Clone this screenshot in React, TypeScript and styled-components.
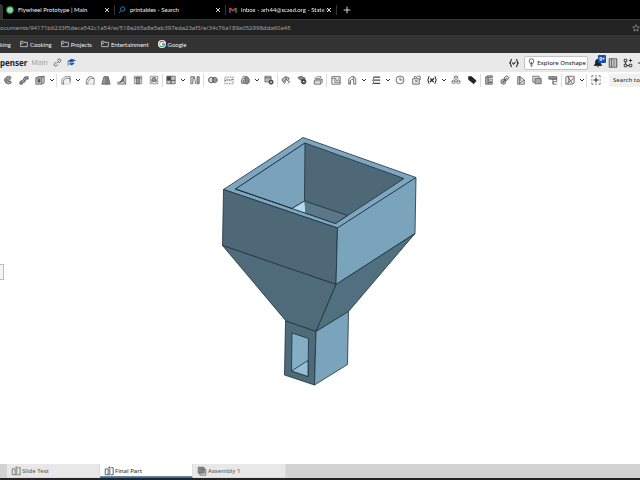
import React from "react";
import styled, { createGlobalStyle } from "styled-components";

const GlobalStyle = createGlobalStyle`
  * { box-sizing: border-box; }
  html, body { margin: 0; height: 100%; }
  #root { height: 100vh; }
  body { font-family: "Noto Sans", "Open Sans", sans-serif; font-size: 6px; overflow: hidden; }
  button, input { font: inherit; color: inherit; border: 0; padding: 0; background: none; }
  svg { display: block; flex: none; }
`;

const Page = styled.div`
  height: 100vh;
  display: flex;
  flex-direction: column;
  overflow: hidden;
  background: #fff;
`;

/* Browser chrome */
const TabStrip = styled.div`
  display: flex;
  flex: none;
  align-items: center;
  height: 19px;
  background: #000;
  color: #f2f2f2;
  font-family: Lato, "Open Sans", sans-serif;
`;
const CurrentTabEdge = styled.div`
  width: 3px;
  height: 15px;
  align-self: flex-end;
  background: #333;
  border-top-right-radius: 3px;
`;
const BrowserTab = styled.div<{ $width: number }>`
  display: flex;
  align-items: center;
  gap: 4px;
  width: ${(p) => p.$width}px;
  height: 10px;
  padding: 0 4px 0 3px;
  border-right: 1px solid #353535;
`;
const TabTitle = styled.button`
  flex: 1;
  min-width: 0;
  display: flex;
  align-items: center;
  gap: 4px;
  text-align: left;
  white-space: nowrap;
`;
const TabText = styled.span<{ $fade?: boolean }>`
  flex: 1;
  ${(p) => p.$fade && "mask-image: linear-gradient(90deg, #000 88%, transparent 105%);"}
`;
const IconButton = styled.button`
  display: flex;
  flex: none;
  align-items: center;
  justify-content: center;
`;
const NewTab = styled(IconButton)`
  width: 19px;
  height: 12px;
`;
const AddressRow = styled.div`
  display: flex;
  flex: none;
  align-items: center;
  height: 16px;
  background: #222;
  border-top: 1px solid #383838;
  color: #a3a3a3;
`;
const Address = styled.input`
  flex: 1;
  min-width: 0;
  height: 14px;
  outline: none;
`;
const Bookmarks = styled.nav`
  display: flex;
  flex: none;
  align-items: center;
  gap: 9px;
  height: 18px;
  background: #333;
  color: #f0f0f0;
  font-family: Lato, "Open Sans", sans-serif;
`;
const Bookmark = styled.a`
  display: flex;
  align-items: center;
  gap: 2px;
  color: inherit;
  text-decoration: none;
  white-space: nowrap;
`;

/* Application header */
const Header = styled.header`
  display: flex;
  flex: none;
  align-items: center;
  height: 19px;
  background: #e9e9e9;
  color: #333;
`;
const DocTitle = styled.h1`
  margin: 0 4px 0 0;
  font-size: 8px;
  font-weight: 700;
  color: #222;
`;
const Workspace = styled.span`
  margin-right: 5px;
  font-size: 7px;
  color: #a0a0a0;
`;
const HeaderActions = styled.div`
  display: flex;
  align-items: center;
  gap: 5px;
  margin-left: auto;
`;
const DocActions = styled.div`
  display: flex;
  gap: 5px;
`;
const Explore = styled.button`
  display: flex;
  align-items: center;
  gap: 1px;
  height: 14px;
  padding: 0 1px 0 2px;
  border: 1px solid #c4c4c4;
  border-radius: 2px;
  background: #fff;
  font-weight: 500;
  white-space: nowrap;
`;
const Bell = styled(IconButton)`
  position: relative;
  width: 10px;
  height: 13px;
  justify-content: flex-start;
`;
const Badge = styled.span`
  position: absolute;
  top: -1px;
  right: -3px;
  width: 8px;
  height: 8px;
  border-radius: 1px;
  background: #1450b4;
  color: #fff;
  font-size: 5px;
  font-weight: 700;
  line-height: 8px;
  text-align: center;
`;

/* Feature toolbar */
const Toolbar = styled.div`
  display: flex;
  flex: none;
  align-items: center;
  height: 16px;
  background: #fff;
  color: #606060;
  overflow: hidden;
`;
const Tool = styled(IconButton)`
  width: 16px;
  height: 16px;
`;
const Arrow = styled(IconButton)`
  width: 8px;
  height: 16px;
  color: #333;
`;
const Divider = styled.span<{ $wide?: boolean }>`
  flex: none;
  width: 1px;
  height: 13px;
  margin-right: ${(p) => (p.$wide ? 1 : 0)}px;
  background: #dcdcdc;
`;
const Search = styled.input`
  flex: 1;
  min-width: 0;
  height: 13px;
  margin-left: 5px;
  padding-left: 4px;
  border-radius: 2px 0 0 2px;
  background: #f0f0f0;
  color: #444;
  font-weight: 500;
  outline: none;
  &::placeholder { color: #444; opacity: 1; }
`;

/* Modelling area */
const Canvas = styled.main`
  display: flex;
  align-items: center;
  flex: 1;
  min-height: 0;
  position: relative;
`;
const Model = styled.svg`
  width: 100%;
  height: 100%;
`;
const PanelHandle = styled.button`
  position: absolute;
  left: 0;
  width: 4px;
  height: 16px;
  margin-top: -8px;
  border: 1px solid #bdbdbd;
  border-left: 0;
  background: #f6f6f6;
`;

/* Document tabs */
const DocTabs = styled.nav`
  display: flex;
  flex: none;
  height: 14px;
  padding-left: 7px;
  background: #d2d2d2;
`;
const DocTab = styled.button<{ $active?: boolean }>`
  display: flex;
  align-items: center;
  gap: 1px;
  width: 93px;
  padding-left: 4px;
  border-right: 1px solid #ddd;
  border-bottom: 1px solid ${(p) => (p.$active ? "#3d6ea8" : "#dedede")};
  box-shadow: ${(p) => (p.$active ? "inset 0 -1px #5b8abd" : "none")};
  background: ${(p) => (p.$active ? "#fff" : "#e8e8e8")};
  color: ${(p) => (p.$active ? "#444" : "#666")};
  font-weight: 500;
  white-space: nowrap;
`;
const Taskbar = styled.div`
  flex: none;
  height: 2px;
  background: #242424;
`;

const drawings: Record<string, React.ReactNode> = {
  revolve: (
    <>
      <path d="M10 3 8 1.5 4.5 2 2 4.5v3L4 10l3 .8 3-1.3-1-2-2 .7-1.7-1V5l1.3-1 2 .5z" fill="#aaa" />
      <path d="M5 3 3.5 5v3L5 10M9 5.5H6.5v1.8H9" />
    </>
  ),
  sweep: (
    <>
      <path d="M1 9.500C1 6 4 7 5 6s0-4 4-4h2v3H9C7.500 5 8.500 8 6 9H4v2H1z" fill="#999" />
      <path d="M5 5l2 2M7 2.500 9 5M2 8l2 2" />
    </>
  ),
  loft: (
    <>
      <path d="M1 3.500 4 2l7-.5v8L8 11H1z" fill="#ccc" />
      <path d="M1 3.500h7V11M8 3.500l3-2" />
      <path d="M3.500 5v3.500H6V5z" fill="#555" />
    </>
  ),
  fillet: (
    <>
      <path d="M1 11V5.500L4.500 2H11v8" fill="#f2f2f2" strokeWidth=".8" />
      <path d="M3 11V8c0-3 2-4 4-4h4M1 11h3M5.500 11h1M8 11h1M10.500 11h.5M11 4v3" strokeWidth=".8" />
    </>
  ),
  chamfer: (
    <>
      <path d="M1.500 11V7L5 2h3l3 2v7" fill="#f2f2f2" strokeWidth=".8" />
      <path d="M3.500 11V8L7 4h4M5 2 2 6M1.500 11H4M6 11h1M9 11h2" strokeWidth=".8" />
    </>
  ),
  draft: (
    <>
      <path d="M3.500 2h5L11 11H1z" fill="#999" />
      <path d="M6 2v9M8.500 2 8 11" />
    </>
  ),
  rib: (
    <>
      <path d="M8 1.500h2.500V11H1V8.500h3z" fill="#ccc" strokeWidth=".8" />
      <path d="M8 2v5L3 9l5-5z" fill="#777" />
      <path d="M8 7l2.500 4" />
    </>
  ),
  shell: (
    <>
      <path d="M1.500 1.500h9v9h-9z" fill="#e2e2e2" strokeWidth=".7" />
      <path d="M4 3h4v7.500H4z" fill="#999" />
      <path d="M1.500 3.500h9" />
    </>
  ),
  hole: (
    <>
      <path d="M1.500 1.500h9v9h-9z" fill="#eee" strokeWidth=".7" />
      <circle cx="6" cy="5.500" r="2.500" fill="#999" />
      <path d="M3.500 6v3M8.500 6v3" />
    </>
  ),
  pattern: (
    <>
      <path d="M1 1.500h5v5H1z" fill="#444" />
      <path d="M6 1.500h5v5H6zM1 6.500h5v4H1zM6 6.500h5v4H6z" fill="#ccc" />
    </>
  ),
  mirror: (
    <>
      <path d="M1 2h3.500v2h-1v6.500H1z" fill="#ddd" />
      <path d="m5 1.500 2 9.500" />
      <path d="M11 2H8.500v8.500H11z" fill="#aaa" />
    </>
  ),
  boolean: (
    <>
      <circle cx="4" cy="6" r="3.200" fill="#eee" />
      <circle cx="8" cy="6" r="3.200" fill="#999" />
      <circle cx="4" cy="6" r="3.200" />
    </>
  ),
  split: (
    <>
      <path d="M1 2.500h10v8H1z" fill="#f5f5f5" strokeDasharray="2 1" strokeWidth=".8" />
      <path d="M1 7c3-3 6 1 10-2" />
    </>
  ),
  transform: (
    <>
      <path d="M1.500 6 4 3.500l3 1V10H2z" fill="#ccc" />
      <path d="M6 2.500 9 2l2 3v4l-3 2-2-2z" fill="#888" />
      <path d="M3 3c1-2 2-2 4-1M4 6v4" />
    </>
  ),
  deletePart: (
    <>
      <path d="M1 1.500h7.500v7H1z" fill="#bbb" strokeWidth=".8" />
      <path d="M1 3.500h7.500" />
      <circle cx="8.500" cy="8.500" r="2.500" fill="#444" stroke="#444" />
      <path d="m7.700 7.700 1.600 1.600m0-1.600L7.700 9.300" stroke="#fff" />
    </>
  ),
  modify: (
    <>
      <path d="M1 6c2-4 6-5 9-2L8 7 6 5 3 9z" fill="#bbb" />
      <path d="M5 1.500 6.500 5 4 11M8 7l2.500 1L8 10" />
    </>
  ),
  deleteFace: (
    <>
      <path d="m1 3 4-1.500L10 4 8 6.500 4 6z" fill="#888" />
      <circle cx="8" cy="8" r="2.800" fill="#444" stroke="#444" />
      <path d="m7.200 7.200 1.600 1.600m0-1.600L7.200 8.800" stroke="#fff" />
    </>
  ),
  moveFace: (
    <>
      <path d="M1.500 7 4 5h7v4l-2 2H1.500z" fill="#e2e2e2" />
      <path d="M2 4.500 4.500 2H10L8 4.500zM1.500 7H9v4M9 7l2-2" strokeWidth=".8" />
    </>
  ),
  sketchPlane: (
    <>
      <path d="M1 2h10v9H1z" fill="#f2f2f2" />
      <path d="M1 4h5v3h5M4.500 4v5H11M7 7l4-4" strokeWidth=".8" />
    </>
  ),
  thicken: (
    <>
      <path d="M2 5 5 2h3l2.500 2v7H8V6L6 5 4 7v4H2z" fill="#f2f2f2" />
      <path d="M4 7v4M8 2v4" />
    </>
  ),
  planes: (
    <>
      <path d="M3 2.500h8M3 6h8M3 10h8" stroke="#444" strokeWidth="1.500" />
      <path d="M3 2.500v3L1 7M3 7v3L1 11" />
    </>
  ),
  clock: (
    <>
      <circle cx="6" cy="6" r="4.800" fill="#f2f2f2" />
      <path d="M6 3v3h3" />
    </>
  ),
  derive: (
    <>
      <path d="M2 4.500h8V11H2z" fill="#eee" />
      <path d="M4 4V2h2l1 2M7 1.500h4V6M5 9l3-3M5 6l3 3" />
    </>
  ),
  variable: (
    <>
      <path d="M2.500 1.500Q-.5 6 2.500 10.500M9.500 1.500q3 4.500 0 9" stroke="#222" strokeWidth="1.200" />
      <path d="m4 4 4 4.500M8.500 4 3.500 8.500" stroke="#222" strokeWidth="1.500" />
    </>
  ),
  composite: (
    <path d="m6 1 2 1v2.500l-2 1-2-1V2zM3.200 6l2 1v2.500l-2 1-2-1V7zM8.800 6l2 1v2.500l-2 1-2-1V7zM4 2l2 1 2-1M1.200 7l2 1 2-1M6.800 7l2 1 2-1" fill="#f2f2f2" strokeWidth=".8" />
  ),
  tag: <path d="M2 2h3.500L11 7 8 10.500 2 5.500z" fill="#222" stroke="#222" />,
  sheet: (
    <>
      <path d="M2 2.500 4 1h6v2H5v6h5v2H2z" fill="#bbb" />
      <path d="M2 2.500h3V11M7 5h3v3H7z" />
    </>
  ),
  flange: (
    <>
      <path d="m5 3 3-2 3 2-2 3-3 1z" fill="#ddd" />
      <circle cx="4" cy="8" r="3" fill="#bbb" />
      <path d="m3 9 5-5" strokeWidth="1.300" />
    </>
  ),
  bend: (
    <>
      <path d="M2 2h3l5 4v5H2z" fill="#e4e4e4" />
      <path d="M4 2v9M4 10l6-4M5 2v5" />
    </>
  ),
  corner: (
    <>
      <path d="M1 1.500h7.500v7H1z" fill="#eee" />
      <path d="M3.500 4H11v6.500H3.500z" fill="#aaa" />
    </>
  ),
  table: (
    <>
      <path d="M1 2h9.500v3H1z" fill="#999" />
      <path d="M4 5h6.500v3H6v3h4.500M6 5v6" />
    </>
  ),
  frame: (
    <>
      <path d="M1 2.500 3 1.500h8v8L9 11H1z" fill="#eee" />
      <path d="m3 1.500 6 9M4.500 2v7l6-5M2 10l3-1" />
    </>
  ),
  addFeature: (
    <>
      <path d="M1 3V1h2M5 1h2M9 1h2v2M11 5v2M11 9v2H9M7 11H5M3 11H1V9M1 7V5" />
      <path d="M6 3v6M3 6h6" stroke="#222" strokeWidth="1.200" />
    </>
  ),
  braces: (
    <path d="M3.500 1.500C1.500 1.500 3 5 1 6c2 1 .5 4.500 2.500 4.500M8.500 1.500c2 0 .5 3.500 2.500 4.500-2 1-.5 4.500-2.500 4.500M4 5.500l1.500 2L8 4.500" stroke="#222" strokeWidth="1.300" />
  ),
  bulb: <path d="M4.500 8C4.500 6.500 3 6 3 4a3 3 0 0 1 6 0c0 2-1.500 2.500-1.500 4zM4.700 9.500h2.600M5 11h2M6 5v3" />,
  bell: <path d="M6 1.500c2.500 0 3 2 3 4S10 8 10.500 9h-9C2 8 3 7.500 3 5.500s.5-4 3-4zM5 10.500h2" fill="#222" stroke="#222" />,
  list: (
    <>
      <path d="M1.500 1h9v10h-9zM4.500 1v10" />
      <path d="M3 3.500h1M3 6h1M3 8.500h1M6 3.500h3M6 6h3M6 8.500h3" />
    </>
  ),
  apps: <path d="M1.500 1.500h3v3h-3zM1.500 7.500h3v3h-3zM7.500 7.500h3v3h-3zM9 1v4M7 3h4M4.500 9h3M3 4.500v3" stroke="#222" />,
  link: <path d="m5 7 3-3M5.500 3.500l2-2c1-1 4 1 2.500 3L8 6.500M6.500 8.500l-2 2c-1.500 1-4-1-2.500-3L4 5.500" stroke="#333" />,
  learn: (
    <>
      <path d="m6 1 6 2-6 3-5-2z" fill="#1c57ad" stroke="none" />
      <path d="M3.500 5.500v3l3 1 3-2v-2L6 7z" fill="#1c57ad" stroke="none" />
      <path d="M1.500 4v6" stroke="#1c57ad" />
    </>
  ),
  help: <circle cx="6" cy="6" r="5" fill="#333" />,
  part: <path d="M1.500 3.500H5v7H1.500zM5 2l2-1v9.500H5M8.500 2H11v8.500H8" />,
  assembly: (
    <>
      <path d="M3.500 4h7v7h-7z" fill="#ddd" />
      <path d="M1.500 1.500h7v7h-7z" fill="#888" />
      <path d="M4 4h5" />
    </>
  ),
  star: <path d="m6 1 1.500 3.300 3.500.4-2.600 2.400.7 3.500L6 8.900l-3.100 1.700.7-3.500L1 4.700l3.500-.4z" />,
  folder: <path d="M1 10V2h3.500L6 3.500h5V10zM1 5h3.500L6 3.500" />,
  close: <path d="m2 2 8 8m0-8-8 8" strokeWidth="1.800" />,
  plus: <path d="M6 1v10M1 6h10" strokeWidth="1.300" />,
  chevron: <path d="m2 4 4 4 4-4" strokeWidth="2" />,
  find: (
    <>
      <circle cx="7" cy="4.500" r="3.200" stroke="#187bd0" strokeWidth="1.500" />
      <path d="M4.800 7 1.500 10.500" stroke="#187bd0" strokeWidth="1.500" />
    </>
  ),
  onshape: (
    <>
      <circle cx="6" cy="6" r="5.500" fill="#48a760" stroke="none" />
      <path d="m6 3 3 1.500v3L6 9 3 7.500v-3zM3 4.500 6 6l3-1.500M6 6v3" stroke="#dff4e3" />
    </>
  ),
  gmail: (
    <>
      <path d="M1.500 10V3" stroke="#4285f4" strokeWidth="2" />
      <path d="M10.500 10V3" stroke="#34a853" strokeWidth="2" />
      <path d="m1.500 3 4.500 4 4.500-4" stroke="#ea4335" strokeWidth="2" />
    </>
  ),
  google: (
    <>
      <circle cx="6" cy="6" r="6" fill="#fff" stroke="none" />
      <path d="M3 3.500A4 4 0 0 1 8.800 3.200" stroke="#ea4335" strokeWidth="2" />
      <path d="M3 3.500a4 4 0 0 0 0 5" stroke="#fbbc05" strokeWidth="2" />
      <path d="M3 8.500a4 4 0 0 0 5.700.5" stroke="#34a853" strokeWidth="2" />
      <path d="M6 6h4a4 4 0 0 1-1.300 3" stroke="#4285f4" strokeWidth="2" />
    </>
  ),
};

const Icon = ({ name, size = 10 }: { name: string; size?: number }) => (
  <svg width={size} height={size} viewBox="0 0 12 12" fill="none" stroke="currentColor" strokeWidth="1" aria-hidden="true">
    {drawings[name]}
  </svg>
);

const browserTabs = [
  { icon: "onshape", title: "Flywheel Prototype | Main", width: 112 },
  { icon: "find", title: "printables - Search", width: 111 },
  { icon: "gmail", title: "Inbox - arh44@scasd.org - State C", width: 111, fade: true },
];

/* "v" adds a drop-down arrow, "|" a divider, "||" a wider one */
const tools =
  "revolve sweep loft v || fillet v chamfer draft rib shell hole | pattern v mirror || boolean split transform v deletePart | modify deleteFace moveFace || sketchPlane thicken v planes v clock derive variable v composite tag | sheet flange bend corner table | frame v || addFeature".split(" ");

const Hopper = () => (
  <Model viewBox="0 88 640 376" role="img" aria-label="Hopper part">
    <g stroke="#1c303c" strokeWidth="0.8" strokeLinejoin="round">
      <path d="M223.500 189.500 303 137.500 416 177.500 337.500 228z" fill="#7da7c0" />
      <path d="M235.500 189 305 143 404 178.500 335.500 223.500z" fill="#4e6877" />
      <path d="M235.500 189 305 143 304.500 201 292 208.500z" fill="#7aa2ba" />
      <path d="m292 208.500 12.500-7.500 1 12.200z" fill="#b4d8ec" stroke="none" />
      <path d="m304.500 201 43 14.500-12 8-30-10.300z" fill="#5b7788" stroke="none" />
      <path d="M292 208.500 304.500 201l43 14.500M235.500 189l100 34.500 12-8" fill="none" />
      <path d="M223.500 189.500 337.500 228 336 284.500 222.500 245.500z" fill="#4f6877" />
      <path d="M337.500 228 416 177.500 415 233.500 336 284.500z" fill="#7aa4bc" />
      <path d="M222.500 245.500 336 284.500 316 331.500 286 321z" fill="#4f6b7a" />
      <path d="M336 284.500 415 233.500 348.500 311.500 316 331.500z" fill="#507080" />
      <path d="M285.500 321 316 331.500 314.500 385 284.500 375z" fill="#4f6a79" />
      <path d="M316 331.500 348.500 311.500 347.500 364.500 314.500 385z" fill="#7aa4bc" />
      <path d="m292 333 16.500 5.500-.5 38-16.500-5.500z" fill="#84aec6" />
      <path d="m291.500 371 16.500-10.500v16z" fill="#96bfd5" />
    </g>
  </Model>
);

export default function App() {
  return (
    <Page>
      <GlobalStyle />
      <TabStrip>
        <CurrentTabEdge />
        {browserTabs.map((t) => (
          <BrowserTab key={t.title} $width={t.width}>
            <TabTitle>
              <Icon name={t.icon} size={8} />
              <TabText $fade={t.fade}>{t.title}</TabText>
            </TabTitle>
            <IconButton aria-label={`Close ${t.title}`}>
              <Icon name="close" size={6} />
            </IconButton>
          </BrowserTab>
        ))}
        <NewTab aria-label="New tab">
          <Icon name="plus" size={8} />
        </NewTab>
      </TabStrip>
      <AddressRow>
        <Address aria-label="Address" defaultValue="ocuments/94171b6233f5deca542c1a54/w/518e265a8e5eb397eda23af3/e/34c76a189a052998dda60a45" />
        <IconButton aria-label="Add bookmark">
          <Icon name="star" size={8} />
        </IconButton>
      </AddressRow>
      <Bookmarks>
        <Bookmark href="#">king</Bookmark>
        {["Cooking", "Projects", "Entertainment"].map((name) => (
          <Bookmark href="#" key={name}>
            <Icon name="folder" size={8} />
            {name}
          </Bookmark>
        ))}
        <Bookmark href="#">
          <Icon name="google" size={8} />
          Google
        </Bookmark>
      </Bookmarks>
      <Header>
        <DocTitle>penser</DocTitle>
        <Workspace>Main</Workspace>
        <DocActions>
          <IconButton aria-label="Copy link"><Icon name="link" size={9} /></IconButton>
          <IconButton aria-label="Learning center"><Icon name="learn" size={9} /></IconButton>
        </DocActions>
        <HeaderActions>
          <IconButton aria-label="Custom features"><Icon name="braces" /></IconButton>
          <Explore>
            <Icon name="bulb" size={9} />
            Explore Onshape
          </Explore>
          <Bell aria-label="Notifications">
            <Icon name="bell" />
            <Badge>9+</Badge>
          </Bell>
          <IconButton aria-label="Release list"><Icon name="list" /></IconButton>
          <IconButton aria-label="Apps"><Icon name="apps" /></IconButton>
          <IconButton aria-label="Help"><Icon name="help" size={2} /></IconButton>
        </HeaderActions>
      </Header>
      <Toolbar role="toolbar">
        {tools.map((t, i) =>
          t === "v" ? (
            <Arrow key={i} aria-label="More">
              <Icon name="chevron" size={6} />
            </Arrow>
          ) : t[0] === "|" ? (
            <Divider key={i} $wide={t === "||"} />
          ) : (
            <Tool key={i} aria-label={t}>
              <Icon name={t} />
            </Tool>
          )
        )}
        <Search aria-label="Search tools" placeholder="Search tools" />
      </Toolbar>
      <Canvas>
        <Hopper />
        <PanelHandle aria-label="Open panel" />
      </Canvas>
      <DocTabs>
        <DocTab><Icon name="part" />Slide Test</DocTab>
        <DocTab $active><Icon name="part" />Final Part</DocTab>
        <DocTab><Icon name="assembly" />Assembly 1</DocTab>
      </DocTabs>
      <Taskbar />
    </Page>
  );
}
